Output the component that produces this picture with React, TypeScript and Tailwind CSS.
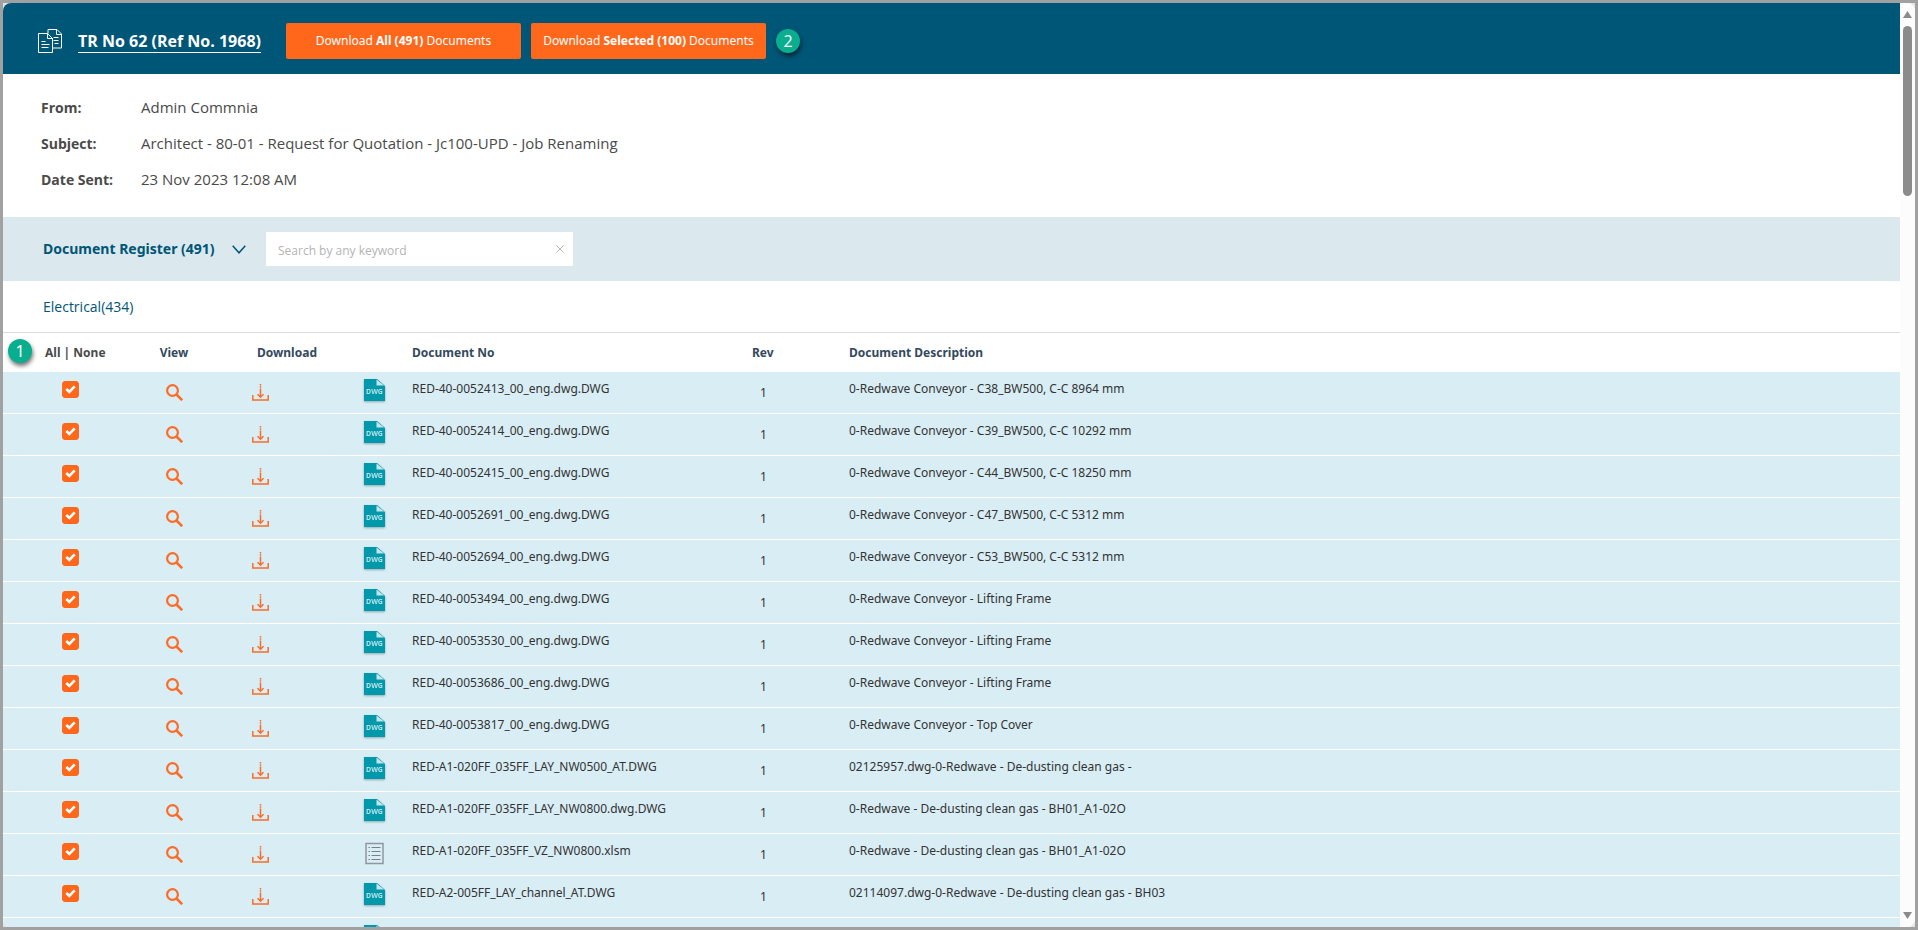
import { useState } from 'react'

interface Doc {
  id: number
  no: string
  rev: string
  description: string
  type: 'DWG' | 'SHEET'
}

const documents: Doc[] = [
  { id: 1, no: 'RED-40-0052413_00_eng.dwg.DWG', rev: '1', description: '0-Redwave Conveyor - C38_BW500, C-C 8964 mm', type: 'DWG' },
  { id: 2, no: 'RED-40-0052414_00_eng.dwg.DWG', rev: '1', description: '0-Redwave Conveyor - C39_BW500, C-C 10292 mm', type: 'DWG' },
  { id: 3, no: 'RED-40-0052415_00_eng.dwg.DWG', rev: '1', description: '0-Redwave Conveyor - C44_BW500, C-C 18250 mm', type: 'DWG' },
  { id: 4, no: 'RED-40-0052691_00_eng.dwg.DWG', rev: '1', description: '0-Redwave Conveyor - C47_BW500, C-C 5312 mm', type: 'DWG' },
  { id: 5, no: 'RED-40-0052694_00_eng.dwg.DWG', rev: '1', description: '0-Redwave Conveyor - C53_BW500, C-C 5312 mm', type: 'DWG' },
  { id: 6, no: 'RED-40-0053494_00_eng.dwg.DWG', rev: '1', description: '0-Redwave Conveyor - Lifting Frame', type: 'DWG' },
  { id: 7, no: 'RED-40-0053530_00_eng.dwg.DWG', rev: '1', description: '0-Redwave Conveyor - Lifting Frame', type: 'DWG' },
  { id: 8, no: 'RED-40-0053686_00_eng.dwg.DWG', rev: '1', description: '0-Redwave Conveyor - Lifting Frame', type: 'DWG' },
  { id: 9, no: 'RED-40-0053817_00_eng.dwg.DWG', rev: '1', description: '0-Redwave Conveyor - Top Cover', type: 'DWG' },
  { id: 10, no: 'RED-A1-020FF_035FF_LAY_NW0500_AT.DWG', rev: '1', description: '02125957.dwg-0-Redwave - De-dusting clean gas -', type: 'DWG' },
  { id: 11, no: 'RED-A1-020FF_035FF_LAY_NW0800.dwg.DWG', rev: '1', description: '0-Redwave - De-dusting clean gas - BH01_A1-02O', type: 'DWG' },
  { id: 12, no: 'RED-A1-020FF_035FF_VZ_NW0800.xlsm', rev: '1', description: '0-Redwave - De-dusting clean gas - BH01_A1-02O', type: 'SHEET' },
  { id: 13, no: 'RED-A2-005FF_LAY_channel_AT.DWG', rev: '1', description: '02114097.dwg-0-Redwave - De-dusting clean gas - BH03', type: 'DWG' },
  { id: 14, no: '', rev: '', description: '', type: 'DWG' },
]

const details = [
  { label: 'From:', value: 'Admin Commnia' },
  { label: 'Subject:', value: 'Architect - 80-01 - Request for Quotation - Jc100-UPD - Job Renaming' },
  { label: 'Date Sent:', value: '23 Nov 2023 12:08 AM' },
]

const totalCount = 491
// selected documents on the pages that are not loaded yet
const selectedElsewhere = 86

function CopyIcon() {
  return (
    <svg width="24" height="24" viewBox="0 0 24 24" fill="none" stroke="#fff" strokeWidth="1" aria-hidden="true">
      <path d="M10 4.500V.5h9l4.500 4.500v14h-9" />
      <path d="M18.500.5v5h5" />
      <path d="M.5 4.500h9l5 5v14H.5z" />
      <path d="M9.500 4.500v5h5" />
      <path d="M3.500 12.500h4M3.500 15.500h8M3.500 18.500h7M15.500 8.500h5M15.500 11.500h5M16.500 14.500h4" />
    </svg>
  )
}

function SearchIcon() {
  return (
    <svg width="17" height="17" viewBox="0 0 17 17" fill="none" stroke="#fb6c28" aria-hidden="true">
      <circle cx="6.500" cy="6.500" r="5.400" strokeWidth="2.200" />
      <path d="M10.500 10.500l5.700 5.700" strokeWidth="2.600" />
    </svg>
  )
}

function DownloadIcon() {
  return (
    <svg width="17" height="17" viewBox="0 0 17 17" fill="none" stroke="#fb6c28" aria-hidden="true">
      <path d="M.8 11v5h15.400v-5" strokeWidth="1.500" />
      <path d="M8.500 0v1.500M8.500 2.200v1.500M8.500 4.500v8.500" strokeWidth="1.500" />
      <path d="M5.500 10.300l3 3 3-3" strokeWidth="1.500" />
    </svg>
  )
}

function DwgIcon() {
  return (
    <svg width="21" height="24" viewBox="0 0 21 24" className="drop-shadow-[0_1px_1px_rgba(0,0,0,0.3)]" aria-hidden="true">
      <path d="M0 0h13l8 7v15H0z" fill="#0099ab" />
      <path d="M12.500 0.500v6h7.500z" fill="#c5e4ec" />
      <text x="10.500" y="15" fontSize="7" fontWeight="700" textAnchor="middle" fill="#b5e0e8">DWG</text>
    </svg>
  )
}

function SheetIcon() {
  return (
    <svg width="21" height="24" viewBox="0 0 21 24" fill="none" stroke="#8f979f" aria-hidden="true">
      <rect x="2" y="2.500" width="17" height="20" strokeWidth="1.500" />
      <path d="M7.500 6.500h9M7.500 10.500h9M7.500 14.500h9M7.500 18.500h9" stroke="#77808a" />
      <path d="M4.500 6.500h1.500M4.500 10.500h1.500M4.500 14.500h1.500M4.500 18.500h1.500" stroke="#77808a" />
    </svg>
  )
}

function StepBadge({ children }: { children: string }) {
  return (
    <span className="flex size-6 items-center justify-center rounded-full bg-[#09ae8e] text-base font-normal text-white shadow-[1px_3px_4px_rgba(0,0,0,0.55)]">
      {children}
    </span>
  )
}

function DocumentRow({ doc, checked, onToggle }: { doc: Doc; checked: boolean; onToggle: () => void }) {
  return (
    <tr className="h-[42px] bg-[#d9edf5] align-top [&>td]:border-b [&>td]:border-white">
      <td className="pt-[9px] pl-[59px]">
        <label className="relative block size-[17px]">
          <input
            type="checkbox"
            checked={checked}
            onChange={onToggle}
            aria-label={`Select ${doc.no}`}
            className="block size-[17px] appearance-none rounded-[3px] border border-[#ff671b] bg-white checked:bg-[#ff671b]"
          />
          {checked && (
            <svg className="pointer-events-none absolute inset-0" width="17" height="17" viewBox="0 0 17 17" fill="none" stroke="#fff" strokeWidth="2.600" aria-hidden="true">
              <path d="M4.300 8l3 3 5.400-5.600" />
            </svg>
          )}
        </label>
      </td>
      <td className="pt-3">
        <button type="button" aria-label="View" className="mx-auto block">
          <SearchIcon />
        </button>
      </td>
      <td className="pt-3 pl-7">
        <button type="button" aria-label="Download" className="block">
          <DownloadIcon />
        </button>
      </td>
      <td className="pt-[7px]">{doc.type === 'DWG' ? <DwgIcon /> : <SheetIcon />}</td>
      <td className="pt-[7px]">{doc.no}</td>
      <td className="pt-[11px] pl-2">{doc.rev}</td>
      <td className="pt-[7px]">{doc.description}</td>
    </tr>
  )
}

export default function App() {
  const [selected, setSelected] = useState<number[]>(documents.map((d) => d.id))
  const [query, setQuery] = useState('')
  const [open, setOpen] = useState(true)

  const visible = documents.filter((d) =>
    `${d.no} ${d.description}`.toLowerCase().includes(query.toLowerCase())
  )

  function toggle(id: number) {
    setSelected((prev) => (prev.includes(id) ? prev.filter((x) => x !== id) : [...prev, id]))
  }

  const buttonCls = "h-9 w-[235px] rounded-[2px] bg-[#ff671b] font-['Segoe_UI','Noto_Sans',sans-serif] text-xs whitespace-nowrap text-white"

  return (
    <div className="h-screen bg-[#a1a1a1] p-[3px] font-['Segoe_UI','Open_Sans',sans-serif] text-[#4a4a4a]">
      <div className="h-full bg-[#e4e4e4]">
        <div className="flex h-full overflow-hidden rounded-lg bg-white">
          <main className="min-w-0 flex-1 overflow-y-auto [scrollbar-width:none]">
            <header className="flex h-[71px] items-center bg-[#005677] pt-1 pl-[35px]">
              <CopyIcon />
              <h1 className="ml-4 w-[208px] text-base leading-5 font-bold text-white">
                <a href="#" className="border-b border-white whitespace-nowrap">TR No 62 (Ref No. 1968)</a>
              </h1>
              <div className="flex items-center gap-[10px]">
                <button type="button" className={buttonCls}>
                  Download <b>All ({totalCount})</b> Documents
                </button>
                <button type="button" className={buttonCls}>
                  Download <b>Selected ({selected.length + selectedElsewhere})</b> Documents
                </button>
                <StepBadge>2</StepBadge>
              </div>
            </header>

            <dl className="pt-[15px] pb-5 pl-[38px] text-[15px] leading-9">
              {details.map((d) => (
                <div key={d.label} className="flex h-9 items-baseline">
                  <dt className="w-[100px] text-sm leading-9 font-bold">{d.label}</dt>
                  <dd>{d.value}</dd>
                </div>
              ))}
            </dl>

            <section>
              <div className="flex h-16 items-center bg-[#dbe8ed] pl-10">
                <button
                  type="button"
                  onClick={() => setOpen((p) => !p)}
                  className="flex w-[223px] items-center justify-between pr-5 font-['Segoe_UI','Noto_Sans',sans-serif] text-sm font-bold whitespace-nowrap text-[#005677]"
                >
                  Document Register ({totalCount})
                  <svg width="14" height="9" viewBox="0 0 14 9" fill="none" stroke="#005677" strokeWidth="1.500" aria-hidden="true">
                    <path d="M.7.8L7 7.800 13.300.8" />
                  </svg>
                </button>
                <div className="flex h-[34px] w-[307px] items-center bg-white px-3">
                  <input
                    type="text"
                    value={query}
                    onChange={(e) => setQuery(e.target.value)}
                    aria-label="Search documents"
                    placeholder="Search by any keyword"
                    className="min-w-0 flex-1 pt-1 text-xs outline-none placeholder:text-[#b4b4b4]"
                  />
                  <button type="button" aria-label="Clear search" onClick={() => setQuery('')} className="-mr-[7px] p-1">
                    <svg width="8" height="8" viewBox="0 0 8 8" stroke="#b4b4b4" aria-hidden="true">
                      <path d="M.5.5l7 7M7.500.5l-7 7" />
                    </svg>
                  </button>
                </div>
              </div>

              {open && (
                <>
                  <h2 className="h-[52px] border-b border-[#dcdcdc] pl-10 text-sm leading-[51px] text-[#005677]">Electrical(434)</h2>
                  <table className="w-full table-fixed border-separate border-spacing-0 text-left font-['Segoe_UI','Noto_Sans',sans-serif] text-xs leading-5 text-[#333]">
                    <colgroup>
                      <col className="w-[121px]" />
                      <col className="w-[100px]" />
                      <col className="w-[140px]" />
                      <col className="w-12" />
                      <col className="w-[340px]" />
                      <col className="w-[97px]" />
                      <col />
                    </colgroup>
                    <thead>
                      <tr className="h-[39px] text-[#34495e]">
                        <th className="relative pl-[42px] whitespace-nowrap text-[#4a4a4a]">
                          <span className="absolute top-[6px] left-[5px]">
                            <StepBadge>1</StepBadge>
                          </span>
                          <button type="button" onClick={() => setSelected(documents.map((d) => d.id))}>All</button>
                          {' | '}
                          <button type="button" onClick={() => setSelected([])}>None</button>
                        </th>
                        <th className="text-center">View</th>
                        <th className="pl-[33px]">Download</th>
                        <th></th>
                        <th>Document No</th>
                        <th>Rev</th>
                        <th>Document Description</th>
                      </tr>
                    </thead>
                    <tbody>
                      {visible.map((doc) => (
                        <DocumentRow key={doc.id} doc={doc} checked={selected.includes(doc.id)} onToggle={() => toggle(doc.id)} />
                      ))}
                    </tbody>
                  </table>
                </>
              )}
            </section>
          </main>

          <div className="flex w-[15px] flex-col items-center bg-[#fcfcfc] pt-2 pb-2" aria-hidden="true">
            <svg width="9" height="7" viewBox="0 0 9 7" fill="#8b8b8b">
              <path d="M4.500 0L9 7H0z" />
            </svg>
            <div className="mt-2 h-[170px] w-[9px] rounded-full bg-[#8b8b8b]" />
            <svg className="mt-auto" width="9" height="7" viewBox="0 0 9 7" fill="#8b8b8b">
              <path d="M4.500 7L9 0H0z" />
            </svg>
          </div>
        </div>
      </div>
    </div>
  )
}
